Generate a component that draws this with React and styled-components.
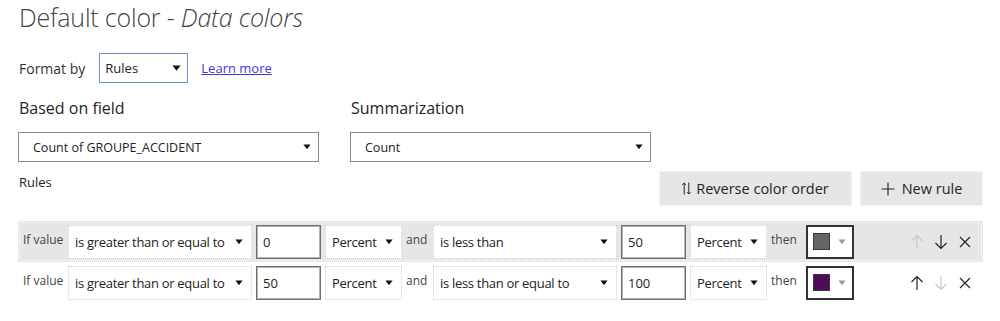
import React from "react";
import styled, { createGlobalStyle } from "styled-components";

const GlobalStyle = createGlobalStyle`
	body {
		margin: 0;
		background: #ffffff;
		font-family: "Open Sans", "Noto Sans", sans-serif;
		color: #252423;
	}
`;

const Page = styled.div`
	width: 1000px;
	height: 321px;
	box-sizing: border-box;
	padding: 0 17px 0 18px;
	overflow: hidden;
`;

const Title = styled.h1`
	margin: 0;
	padding-left: 1px;
	font-size: 25px;
	font-weight: 300;
	line-height: 34px;
	color: #444444;
	letter-spacing: -0.2px;
	white-space: nowrap;

	em {
		font-style: italic;
		padding-right: 2px;
	}
`;

const FormatRow = styled.div`
	display: flex;
	align-items: center;
	margin-top: 19px;
	height: 30px;
	padding-left: 1px;
`;

const FieldLabel = styled.span`
	font-size: ${(p) => p.size || 14}px;
	color: #333333;
	margin-right: ${(p) => p.gap || 0}px;
`;

const SelectBox = styled.div`
	display: flex;
	align-items: center;
	justify-content: space-between;
	box-sizing: border-box;
	width: ${(p) => p.width}px;
	height: ${(p) => p.height || 30}px;
	padding: 0 ${(p) => p.padRight || 8}px 0 ${(p) => p.padLeft || 5}px;
	background: #ffffff;
	border: 1px ${(p) => (p.dotted ? "dotted" : "solid")} ${(p) => p.border || "#8a8a8a"};
	font-size: ${(p) => p.size || 13}px;
	letter-spacing: ${(p) => p.spacing || 0}px;
	color: #222222;
	white-space: nowrap;
	flex-shrink: 0;
`;

const Link = styled.a`
	margin-left: 13px;
	font-size: 13px;
	color: #3b3bdc;
	text-decoration: underline;
`;

const Columns = styled.div`
	display: grid;
	grid-template-columns: 301px 301px;
	column-gap: 31px;
	margin-top: 14px;
`;

const Column = styled.div`
	display: flex;
	flex-direction: column;
	gap: 13px;
`;

const SectionLabel = styled.div`
	font-size: 16px;
	line-height: 22px;
	color: #252423;
	padding-left: 1px;
`;

const ActionsRow = styled.div`
	display: flex;
	align-items: flex-start;
	margin-top: 9px;
`;

const RulesLabel = styled.div`
	font-size: 13px;
	color: #252423;
	margin-top: 2px;
	padding-left: 1px;
	flex: 1;
`;

const ActionButton = styled.button`
	display: flex;
	align-items: center;
	justify-content: center;
	gap: ${(p) => p.gap || 6}px;
	box-sizing: border-box;
	width: ${(p) => p.width}px;
	height: 35px;
	margin-left: 8px;
	background: #e6e6e6;
	border: 1px dotted #ffffff;
	font-family: inherit;
	font-size: 14.5px;
	color: #252423;
	padding: 0;
`;

const RuleList = styled.div`
	margin-top: 15px;
	display: flex;
	flex-direction: column;
`;

const RuleRow = styled.div`
	display: flex;
	align-items: center;
	gap: 4px;
	height: 41px;
	padding: 0 6px 0 5px;
	box-sizing: border-box;
	background: ${(p) => (p.active ? "#e6e6e6" : "transparent")};
	outline: ${(p) => (p.active ? "1px dotted #ffffff" : "none")};
	outline-offset: -2px;
`;

const RowText = styled.span`
	width: ${(p) => p.width}px;
	flex-shrink: 0;
	font-size: 12px;
	color: #444444;
	padding-bottom: 5px;
	white-space: nowrap;
`;

const ValueInput = styled.div`
	display: flex;
	align-items: center;
	box-sizing: border-box;
	width: 65px;
	height: 34px;
	padding-left: 6px;
	background: #ffffff;
	border: 1px solid #6f6f6f;
	box-shadow: inset 0 0 0 1px #b4b4b4;
	font-size: 13px;
	color: #222222;
	flex-shrink: 0;
`;

const ColorPicker = styled.div`
	display: flex;
	align-items: center;
	box-sizing: border-box;
	width: 48px;
	height: 34px;
	margin-left: 4px;
	padding: 0 6px 0 5px;
	background: #ffffff;
	border: 2px solid #333333;
	justify-content: space-between;
	flex-shrink: 0;
`;

const Swatch = styled.span`
	width: 17px;
	height: 17px;
	background: ${(p) => p.color};
	border: 1px solid #3a3a3a;
	box-sizing: border-box;
`;

const IconGroup = styled.div`
	display: flex;
	margin-left: auto;
`;

const IconButton = styled.span`
	display: flex;
	align-items: center;
	justify-content: center;
	width: 24px;
	height: 24px;
	color: ${(p) => (p.disabled ? "#c8c8c8" : "#252423")};
`;

const Caret = ({ size = 9, color = "#111" }) => (
	<svg width={size} height={size * 0.7} viewBox="0 0 10 7">
		<path d="M0.5 0.5 L9.5 0.5 L5 6.5 Z" fill={color} />
	</svg>
);

const ArrowUp = () => (
	<svg width="14" height="16" viewBox="0 0 14 16" fill="none" stroke="currentColor" strokeWidth="1.2">
		<path d="M7 15 V1.5 M1.5 7 L7 1.5 L12.5 7" />
	</svg>
);

const ArrowDown = () => (
	<svg width="14" height="16" viewBox="0 0 14 16" fill="none" stroke="currentColor" strokeWidth="1.2">
		<path d="M7 1 V14.5 M1.5 9 L7 14.5 L12.5 9" />
	</svg>
);

const Close = () => (
	<svg width="12" height="12" viewBox="0 0 12 12" fill="none" stroke="currentColor" strokeWidth="1.2">
		<path d="M1 1 L11 11 M11 1 L1 11" />
	</svg>
);

const ReverseIcon = () => (
	<svg width="9" height="13" viewBox="0 0 9 13" fill="none" stroke="#252423" strokeWidth="1">
		<path d="M2.2 12.5 V1 M0.4 2.8 L2.2 1 L4 2.8" />
		<path d="M6.8 0.5 V12 M5 10.2 L6.8 12 L8.6 10.2" />
	</svg>
);

const PlusIcon = () => (
	<svg width="14" height="14" viewBox="0 0 14 14" fill="none" stroke="#252423" strokeWidth="1.1">
		<path d="M7 0.5 V13.5 M0.5 7 H13.5" />
	</svg>
);

const rules = [
	{ from: "is greater than or equal to", min: "0", to: "is less than", max: "50", color: "#666666", up: false, down: true },
	{ from: "is greater than or equal to", min: "50", to: "is less than or equal to", max: "100", color: "#4f0a5a", up: true, down: false },
];

const RowSelect = ({ width, children }) => (
	<SelectBox width={width} height={34} dotted border="#cfcfcf" size={13} spacing={-0.3} padLeft={6} padRight={8}>
		<span>{children}</span>
		<Caret size={8} />
	</SelectBox>
);

const App = () => (
	<Page>
		<GlobalStyle />
		<Title>
			Default color - <em>Data colors</em>
		</Title>

		<FormatRow>
			<FieldLabel size={14} gap={14}>Format by</FieldLabel>
			<SelectBox width={89} border="#6f93d8" padLeft={5} padRight={6}>
				<span>Rules</span>
				<Caret size={9} />
			</SelectBox>
			<Link href="#">Learn more</Link>
		</FormatRow>

		<Columns>
			<Column>
				<SectionLabel>Based on field</SectionLabel>
				<SelectBox width={301} padLeft={14} padRight={7} size={12.5}>
					<span>Count of GROUPE_ACCIDENT</span>
					<Caret size={8} />
				</SelectBox>
			</Column>
			<Column>
				<SectionLabel>Summarization</SectionLabel>
				<SelectBox width={301} padLeft={14} padRight={7} size={12.5}>
					<span>Count</span>
					<Caret size={8} />
				</SelectBox>
			</Column>
		</Columns>

		<ActionsRow>
			<RulesLabel>Rules</RulesLabel>
			<ActionButton width={193} gap={5}>
				<ReverseIcon />
				Reverse color order
			</ActionButton>
			<ActionButton width={123} gap={7}>
				<PlusIcon />
				New rule
			</ActionButton>
		</ActionsRow>

		<RuleList>
			{rules.map((r, i) => (
				<RuleRow key={i} active={i === 0}>
					<RowText width={41}>If value</RowText>
					<RowSelect width={184}>{r.from}</RowSelect>
					<ValueInput>{r.min}</ValueInput>
					<RowSelect width={77}>Percent</RowSelect>
					<RowText width={23}>and</RowText>
					<RowSelect width={184}>{r.to}</RowSelect>
					<ValueInput>{r.max}</ValueInput>
					<RowSelect width={77}>Percent</RowSelect>
					<RowText width={27}>then</RowText>
					<ColorPicker>
						<Swatch color={r.color} />
						<Caret size={8} color="#9a9a9a" />
					</ColorPicker>
					<IconGroup>
						<IconButton disabled={!r.up}>
							<ArrowUp />
						</IconButton>
						<IconButton disabled={!r.down}>
							<ArrowDown />
						</IconButton>
						<IconButton>
							<Close />
						</IconButton>
					</IconGroup>
				</RuleRow>
			))}
		</RuleList>
	</Page>
);

export default App;
